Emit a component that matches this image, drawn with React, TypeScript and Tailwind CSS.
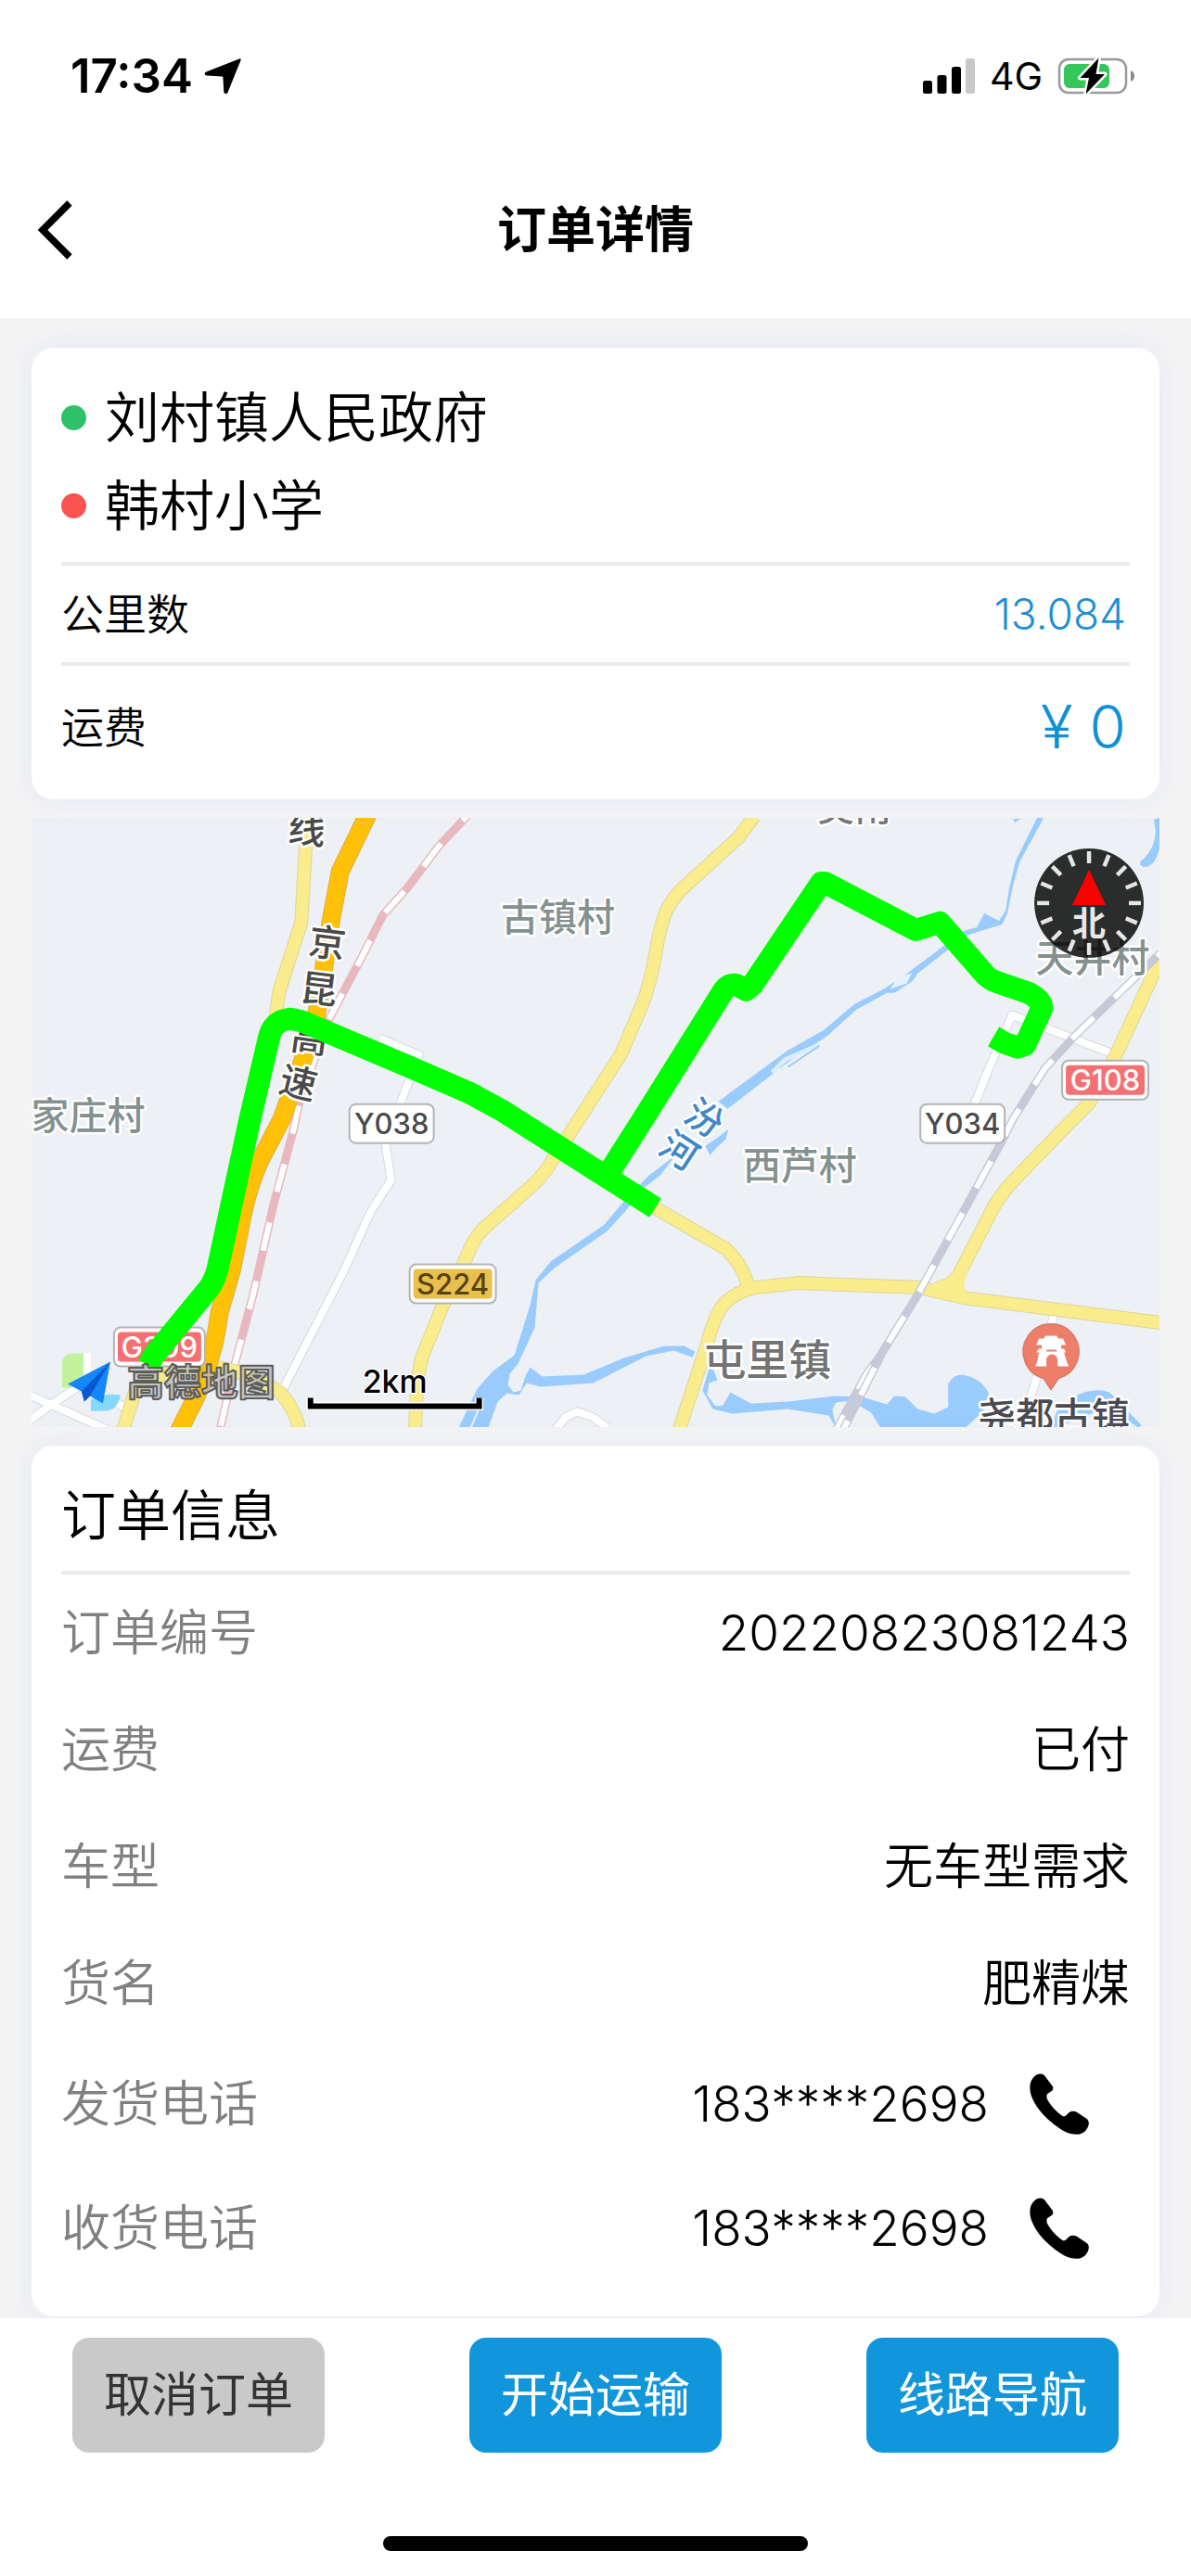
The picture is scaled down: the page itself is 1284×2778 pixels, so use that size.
import React from "react";

const MAP_FONT = "font-['Inter','Noto_Sans_CJK_SC',sans-serif]";

function LocationArrow() {
  return (
    <svg viewBox="0 0 40 40" className="size-10" aria-hidden="true">
      <path
        d="M38 1.5 C39.3 1 40 2 39.5 3.2 L25.6 37.5 C24.6 39.8 21.5 39.4 21.3 37 L20.4 21.3 C20.3 20.7 20 20.4 19.4 20.4 L3 19.6 C0.4 19.4 -0.2 16.6 2.2 15.5 Z"
        fill="#000"
      />
    </svg>
  );
}

function SignalBars() {
  return (
    <svg viewBox="0 0 56 38" className="h-[38px] w-14" aria-hidden="true">
      <rect x="0" y="24" width="10" height="14" rx="2.5" fill="#000" />
      <rect x="15.5" y="18" width="10" height="20" rx="2.5" fill="#000" />
      <rect x="31" y="9" width="10" height="29" rx="2.5" fill="#000" />
      <rect x="46" y="0" width="10" height="38" rx="2.5" fill="#c8c8c8" />
    </svg>
  );
}

function Battery() {
  return (
    <svg viewBox="0 0 84 44" className="h-11 w-[84px]" aria-hidden="true">
      <rect x="2" y="4" width="72" height="36" rx="10" fill="#fff" stroke="#999" strokeWidth="2.5" />
      <path d="M79 16 q4 2 4 6 q0 4 -4 6 z" fill="#888" />
      <rect x="7" y="9" width="49" height="26" rx="6" fill="#35c759" />
      <path
        d="M44.5 2.5 L24.5 24 h9.5 l-3.5 17.5 L51 20 h-9.5 z"
        fill="#000"
        stroke="#fff"
        strokeWidth="5"
        strokeLinejoin="round"
        paintOrder="stroke"
      />
    </svg>
  );
}

function PhoneIcon() {
  return (
    <svg viewBox="0 0 64 66" className="h-[66px] w-16" aria-hidden="true">
      <path
        d="M8 1.2 C10.5 0 14 0 16 2.2 L24.5 13.5 C26 15.6 25.4 18 23.5 19.3 L19.6 21.8 C18.2 23 18 26 19.2 28.2 C23 35 29 41.5 35.5 46 C37 46.6 38.6 46 39.6 45 L42.6 42 C45 40.3 48 40.3 50.4 41.6 L61 48.6 C64.2 50.8 64.4 54 63 57.4 C60.8 62.6 56.4 65.6 51 65.8 C44 66 38 63.4 32.6 59.6 C19 50 7 38.6 1.8 24 C-0.6 16.6 -0.8 6 8 1.2 Z"
        fill="#000"
      />
    </svg>
  );
}

const YELLOW_ROADS = [
  "M331 882 L330 910 L325 995 L301 1070 L297 1100",
  "M133 1542 L145 1503 Q165 1478 225 1474 Q270 1478 303 1503 Q318 1520 323 1542",
  "M814 880 L797 903 L743 952 Q722 970 716 990 Q710 1010 707 1030 Q702 1060 693 1083 L670 1137 L623 1210 L597 1250 Q588 1266 573 1280 L522 1325 Q510 1337 503 1357 L477 1410 L455 1465 Q449 1490 448 1542",
  "M700 1299 L783 1347 Q800 1362 808 1389",
  "M733 1542 L763 1450 Q768 1428 777 1412 Q790 1394 815 1389 L860 1384 L993 1389 L1040 1400 L1252 1427",
  "M1254 1030 L1203 1140 L1175 1190 L1153 1212 L1093 1274 Q1076 1292 1068 1310 L1036 1372 Q1030 1386 1010 1390",
];

const WHITE_ROADS = [
  "M410 1120 L452 1138 L432 1190",
  "M415 1228 L422 1273 L400 1307 L370 1373 L303 1503",
  "M32 1505 L115 1542",
  "M32 1532 L66 1508 L104 1484",
  "M96 1496 L134 1518",
  "M1050 1195 L1068 1150 L1092 1095 L1204 1138",
  "M1137 1418 L1130 1450 L1112 1507",
  "M600 1542 L610 1529 L623 1523 L640 1529 L655 1540",
];

const EXPRESSWAY =
  "M397 878 L367 940 L357 993 L350 1040 L341 1097 L328 1140 L304 1207 L280 1253 Q266 1285 260 1320 L250 1370 L237 1415 L232 1445 Q222 1485 210 1510 L193 1544";
const PINK_RAIL =
  "M504 880 L473 913 L440 957 L413 987 L390 1033 L353 1103 L322 1193 L317 1217 L295 1300 L273 1397 L253 1473 L237 1544";
const GREY_RAIL = "M1252 1028 L1160 1117 L1127 1153 L1093 1207 L1080 1233 L990 1397 L953 1457 L909 1544";
const GREY_RAIL_SIDE = "M953 1457 L934 1483 L901 1544";

const ROUTE =
  "M160 1473 L166 1462 L226 1389 Q232 1380 235 1368 L269 1210 L290 1120 Q294 1101 312 1099 Q324 1100 336 1106 L440 1150 L507 1179 L540 1197 L707 1303";
const ROUTE_BRANCH =
  "M655 1268 L692 1210 L779 1071 Q785 1061 794 1062 L805 1068 L812 1062 L886 952 L890 952 L988 1003 L1014 995 L1060 1048 Q1066 1056 1075 1059 L1110 1071 Q1125 1079 1124 1088 L1106 1127 L1098 1130 L1084 1125 L1072 1118";

type LabelProps = {
  x: number;
  y: number;
  size: number;
  color: string;
  rotate?: number;
  children: string;
};

function MapLabel({ x, y, size, color, rotate = 0, children }: LabelProps) {
  return (
    <text
      x={x}
      y={y}
      fontSize={size}
      fill={color}
      fontWeight={500}
      textAnchor="middle"
      dominantBaseline="central"
      stroke="#fff"
      strokeWidth={5}
      strokeLinejoin="round"
      paintOrder="stroke"
      transform={`rotate(${rotate} ${x} ${y})`}
    >
      {children}
    </text>
  );
}

type ShieldProps = {
  x: number;
  y: number;
  width: number;
  fill: string;
  color: string;
  children: string;
};

function RoadShield({ x, y, width, fill, color, children }: ShieldProps) {
  return (
    <g>
      <rect x={x} y={y} width={width} height={42} rx={7} fill="#fff" stroke="#b4b4b8" strokeWidth={2} />
      <rect x={x + 4} y={y + 5} width={width - 8} height={32} rx={4} fill={fill} />
      <text x={x + width / 2} y={y + 32} fontSize={31} fontWeight={500} fill={color} textAnchor="middle">
        {children}
      </text>
    </g>
  );
}

function Compass() {
  return (
    <g transform="translate(1175 974)">
      <circle r="59" fill="#000" fillOpacity="0.82" />
      {Array.from({ length: 16 }, (_, i) => (
        <line
          key={i}
          y1="-43"
          y2="-56"
          stroke="#e6e6e6"
          strokeWidth="4.5"
          transform={`rotate(${i * 22.5})`}
        />
      ))}
      <path d="M0 -36 L18 2 H-18 Z" fill="#f00" />
      <text y="22" fontSize="36" fontWeight="700" fill="#e8e8e8" textAnchor="middle" dominantBaseline="central">
        北
      </text>
    </g>
  );
}

function RouteMap() {
  return (
    <svg
      viewBox="34 882 1217 658"
      className={`block w-full ${MAP_FONT}`}
      role="img"
      aria-label="运输线路地图"
      fill="none"
      strokeLinejoin="round"
    >
      <rect x="34" y="882" width="1217" height="658" fill="#edf0f4" />

      <g fill="#99cbfd">
        <path d="M729 1246 L712 1268 L695 1281 L675 1306 L655 1328 L598 1368 L581 1384 L577 1432 L566 1456 L559 1471 L550 1482 L548 1494 L554 1502 L562 1500 L567 1484 L572 1475 L585 1485 L630 1483 L673 1465 L717 1452 L738 1452 L750 1458 L747 1464 L727 1457 L697 1463 L640 1492 L583 1496 L568 1492 L560 1505 L547 1503 L537 1512 L527 1540 L495 1540 L515 1498 L532 1479 L555 1462 L572 1408 L578 1381 L594 1361 L652 1321 L672 1297 L700 1268 Z" />
        <path d="M765 1476 L770 1478 L774 1489 L765 1492 L763 1505 L772 1517 L780 1516 L788 1502 L810 1514 L850 1512 L900 1506 L930 1507 L957 1515 L965 1506 L977 1507 L990 1520 L1008 1525 L1023 1518 L1023 1493 Q1028 1483 1038 1483 Q1058 1486 1067 1503 L1060 1523 L1042 1540 L950 1540 L940 1524 L918 1511 L902 1513 L898 1520 L902 1540 L894 1527 L850 1520 L790 1525 L769 1520 L758 1500 Z" />
        <path d="M1158 1507 Q1180 1496 1197 1502 L1210 1515 L1232 1538 L1228 1540 L1195 1518 L1140 1540 L1134 1540 L1140 1523 Z" />
        <path d="M775 1188 L785 1196 L850 1146 L893 1117 L924 1089 L957 1071 L965 1071 L985 1058 L990 1050 L1022 1025 L1045 1008 L1081 997 L1087 985 L1093 955 L1100 930 L1126 882 L1119 882 L1096 928 L1089 957 L1085 982 L1078 993 L1062 985 L1054 1000 L1040 1004 L980 1049 L955 1066 L922 1083 L889 1111 L850 1133 Z" />
        <path d="M1245 884 L1251 882 V916 Q1245 936 1234 935 Q1226 932 1234 926 Q1246 915 1247 896 Z" />
        <path d="M1093 883 h8 l-6 4 z" />
        <path d="M761 1236 L773 1228 L786 1218 L783 1229 L773 1238 L766 1246 Z" />
      </g>
      <path d="M960 1067 L970 1053 L984 1050 L978 1061 Z" fill="#e4f1ff" />
      <path d="M833 1157 L847 1143 L884 1127" stroke="#dcedff" strokeWidth="5" />
      <path d="M850 1151 L884 1128" stroke="#99cbfd" strokeWidth="2" />
      <path d="M508 1540 L520 1512" stroke="#eceff4" strokeWidth="2" />

      <g stroke="#d5d8df" strokeWidth="10">
        {WHITE_ROADS.map((d) => (
          <path key={d} d={d} />
        ))}
      </g>
      <g stroke="#fff" strokeWidth="8">
        {WHITE_ROADS.map((d) => (
          <path key={d} d={d} />
        ))}
      </g>

      <path d={PINK_RAIL} stroke="#e8b8bf" strokeWidth="9" />
      <path d={PINK_RAIL} stroke="#fff" strokeWidth="6" strokeDasharray="31 34" strokeDashoffset="24" />

      <g stroke="#dfd59a" strokeWidth="15">
        {YELLOW_ROADS.map((d) => (
          <path key={d} d={d} />
        ))}
      </g>
      <g stroke="#f9ec8c" strokeWidth="13">
        {YELLOW_ROADS.map((d) => (
          <path key={d} d={d} />
        ))}
      </g>
      <path d="M1008 1384 Q1028 1380 1034 1366 L1044 1372 Q1036 1392 1046 1395 L1040 1406 L1005 1396 Z" fill="#f9ec8c" />

      <g>
        <path d={GREY_RAIL_SIDE} stroke="#c6cad8" strokeWidth="8" />
        <path d={GREY_RAIL_SIDE} stroke="#fff" strokeWidth="5" strokeDasharray="30 32" strokeDashoffset="-20" />
        <path d={GREY_RAIL} stroke="#c6cad8" strokeWidth="9" />
        <path d={GREY_RAIL} stroke="#fff" strokeWidth="6" strokeDasharray="33 31" strokeDashoffset="28" />
      </g>

      <path d={EXPRESSWAY} stroke="#dcae3c" strokeWidth="20" />
      <path d={EXPRESSWAY} stroke="#ffc107" strokeWidth="18" />

      <MapLabel x={331} y={895} size={40} color="#4a4a4a" rotate={4}>线</MapLabel>
      <MapLabel x={353} y={1017} size={40} color="#4a4a4a" rotate={7}>京</MapLabel>
      <MapLabel x={344} y={1067} size={40} color="#4a4a4a" rotate={7}>昆</MapLabel>
      <MapLabel x={334} y={1120} size={40} color="#4a4a4a" rotate={8}>高</MapLabel>
      <MapLabel x={322} y={1168} size={40} color="#4a4a4a" rotate={14}>速</MapLabel>
      <MapLabel x={95} y={1203} size={41} color="#84918f">家庄村</MapLabel>
      <MapLabel x={602} y={989} size={41} color="#84918f">古镇村</MapLabel>
      <MapLabel x={863} y={1257} size={41} color="#84918f">西芦村</MapLabel>
      <MapLabel x={1179} y={1033} size={41} color="#84918f">天井村</MapLabel>
      <MapLabel x={922} y={871} size={40} color="#777">吴南</MapLabel>
      <MapLabel x={828} y={1466} size={46} color="#737373">屯里镇</MapLabel>
      <MapLabel x={1137} y={1528} size={41} color="#494a52">尧都古镇</MapLabel>
      <MapLabel x={760} y={1206} size={40} color="#3f87cb" rotate={33}>汾</MapLabel>
      <MapLabel x={733} y={1241} size={40} color="#3f87cb" rotate={33}>河</MapLabel>

      <RoadShield x={377} y={1191} width={91} fill="#fff" color="#4a4a4a">Y038</RoadShield>
      <RoadShield x={993} y={1191} width={91} fill="#fff" color="#4a4a4a">Y034</RoadShield>
      <RoadShield x={442} y={1364} width={93} fill="#e9c04e" color="#57430f">S224</RoadShield>
      <RoadShield x={1146} y={1144} width={93} fill="#f57073" color="#fff">G108</RoadShield>
      <RoadShield x={123} y={1432} width={98} fill="#f57073" color="#fff">G309</RoadShield>

      <path d={ROUTE_BRANCH} stroke="#0f0" strokeWidth="24" />
      <path d={ROUTE} stroke="#0f0" strokeWidth="24" />

      <g>
        <path
          d="M1134 1499 L1126 1487 A30 30 0 1 1 1142 1487 Z"
          fill="#ee7e69"
          stroke="#d97a68"
          strokeWidth="1.5"
        />
        <path
          d="M1121 1444 L1126 1444 L1128 1441 H1140 L1142 1444 L1147 1444 L1150 1451 H1145 V1455 H1148 L1150 1459 H1148 L1151 1469 L1153 1474 H1141 V1467 A5 5 0 0 0 1129 1467 V1474 H1117 L1119 1469 L1121 1459 H1118 L1121 1455 H1124 V1451 H1118 Z"
          fill="#fff"
        />
        <path d="M1129 1457 H1140" stroke="#ee7e69" strokeWidth="2" />
      </g>

      <Compass />

      <g>
        <path d="M67 1472 Q67 1460 79 1460 H90 V1490 L78 1497 H67 Z" fill="#c0f39b" />
        <path d="M90 1460 H98 V1480 L90 1484 Z" fill="#fff" />
        <path d="M98 1510 Q114 1502 130 1505 Q127 1521 114 1522 H98 Z" fill="#83d8fb" />
        <path d="M73 1493 L119 1469 L111 1514 L97 1506 L91 1512 L88 1501 Z" fill="#1487fb" />
        <path d="M119 1469 L88 1501 L91 1512 L97 1506 Z" fill="#0a58d0" />
        <text
          x="137"
          y="1506"
          fontSize="40"
          fontWeight="700"
          fill="#b9b9b9"
          fillOpacity="0.8"
          stroke="#5d5d5d"
          strokeWidth="2"
        >
          高德地图
        </text>
      </g>

      <g>
        <text
          x="426"
          y="1503"
          fontSize="34"
          fontWeight="500"
          fill="#000"
          textAnchor="middle"
          stroke="#fff"
          strokeWidth="3"
          paintOrder="stroke"
        >
          2km
        </text>
        <path d="M335 1508 V1517 H517 V1508" stroke="#fff" strokeWidth="9" strokeLinejoin="miter" />
        <path d="M335 1508 V1517 H517 V1508" stroke="#000" strokeWidth="6" strokeLinejoin="miter" />
      </g>
    </svg>
  );
}

const CARD = "rounded-3xl bg-white px-8 shadow-[0_0_28px_rgba(190,205,240,0.3)]";

const ORDER_ROWS = [
  { label: "订单编号", value: "20220823081243" },
  { label: "运费", value: "已付" },
  { label: "车型", value: "无车型需求" },
  { label: "货名", value: "肥精煤" },
];

const PHONE_ROWS = [
  { label: "发货电话", value: "183****2698" },
  { label: "收货电话", value: "183****2698" },
];

export default function App() {
  return (
    <div className="flex min-h-screen flex-col bg-[#f4f4f5] font-['Inter','Noto_Sans_CJK_SC',sans-serif] text-black">
      <header className="bg-white pb-[11px]">
        <div className="flex items-center justify-between pt-[50px] pr-[60px] pb-[50px] pl-[76px]">
          <div className="flex items-center gap-3">
            <span className="text-[51px] leading-16 font-semibold">17:34</span>
            <LocationArrow />
          </div>
          <div className="flex items-center gap-4">
            <SignalBars />
            <span className="text-[41px] leading-16">4G</span>
            <Battery />
          </div>
        </div>
        <div className="grid grid-cols-[1fr_auto_1fr] items-center px-10 py-12">
          <button type="button" aria-label="返回" className="justify-self-start">
            <svg viewBox="0 0 38 64" className="h-16 w-[38px]" aria-hidden="true">
              <path d="M35 3 L6 32 L35 61" fill="none" stroke="#000" strokeWidth="7.5" />
            </svg>
          </button>
          <h1 className="text-[53px] leading-[72px] font-bold">订单详情</h1>
        </div>
      </header>

      <main className="flex grow flex-col gap-5 px-[34px] pt-8">
        <section className={`${CARD} pt-7 pb-3`}>
          <ul className="pb-[13px] text-[59px] leading-[95px] font-[350]">
            <li className="flex items-center gap-5">
              <span className="size-[27px] rounded-full bg-[#2dc268]" />
              刘村镇人民政府
            </li>
            <li className="flex items-center gap-5">
              <span className="size-[27px] rounded-full bg-[#fa5350]" />
              韩村小学
            </li>
          </ul>
          <dl className="text-[46px] leading-[72px] font-[350]">
            <div className="flex items-center justify-between border-t-4 border-[#ebebeb] py-4">
              <dt>公里数</dt>
              <dd className="pr-1 text-[#1b8fd2]">13.084</dd>
            </div>
            <div className="flex items-center justify-between border-t-4 border-[#ebebeb] py-[30px]">
              <dt>运费</dt>
              <dd className="pr-1 text-[64px] text-[#1290d6]">¥ 0</dd>
            </div>
          </dl>
        </section>

        <RouteMap />

        <section className={`${CARD} pt-4 pb-7`}>
          <h2 className="border-b-4 border-[#ebebeb] text-[59px] leading-[119px] font-[350]">订单信息</h2>
          <dl className="text-[53px] leading-[126px] font-[350]">
            {ORDER_ROWS.map((row) => (
              <div key={row.label} className="flex items-center justify-between">
                <dt className="text-[#808080]">{row.label}</dt>
                <dd>{row.value}</dd>
              </div>
            ))}
            {PHONE_ROWS.map((row) => (
              <div key={row.label} className="flex items-center justify-between leading-[134px]">
                <dt className="text-[#808080]">{row.label}</dt>
                <dd className="flex items-center gap-11 pr-11">
                  {row.value}
                  <button type="button" aria-label={`拨打${row.label}`}>
                    <PhoneIcon />
                  </button>
                </dd>
              </div>
            ))}
          </dl>
        </section>
      </main>

      <footer className="bg-white px-[78px] pt-[21px] pb-[27px]">
        <div className="flex justify-between text-[51px] leading-[124px]">
          <button type="button" className="rounded-[18px] bg-[#c9c9c9] px-[34px] text-[#333]">
            取消订单
          </button>
          <button type="button" className="rounded-[18px] bg-[#1296db] px-[34px] text-white">
            开始运输
          </button>
          <button type="button" className="rounded-[18px] bg-[#1296db] px-[34px] text-white">
            线路导航
          </button>
        </div>
        <div className="mx-auto mt-[90px] h-4 w-[458px] rounded-full bg-black" />
      </footer>
    </div>
  );
}
